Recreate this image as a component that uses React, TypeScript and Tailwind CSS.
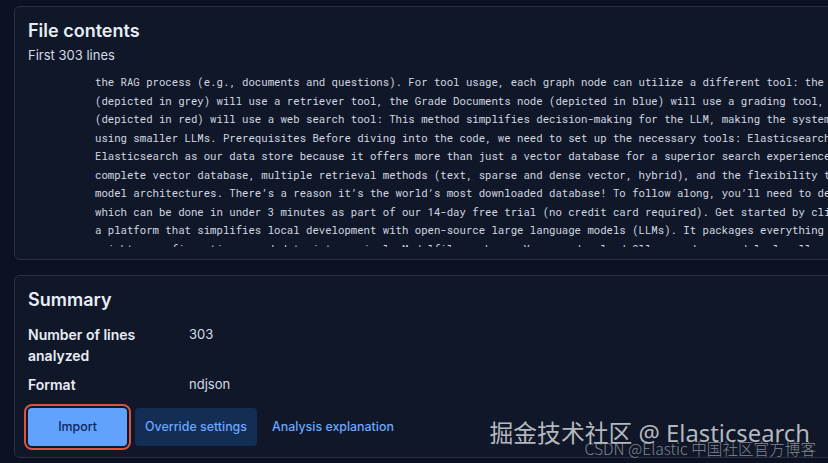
import React from 'react';

const codeLines = [
  'the RAG process (e.g., documents and questions). For tool usage, each graph node can utilize a different tool: the Retrieve node',
  '(depicted in grey) will use a retriever tool, the Grade Documents node (depicted in blue) will use a grading tool, and the Web Search node',
  '(depicted in red) will use a web search tool: This method simplifies decision-making for the LLM, making the system more accessible',
  'using smaller LLMs. Prerequisites Before diving into the code, we need to set up the necessary tools: Elasticsearch: We’ll use',
  'Elasticsearch as our data store because it offers more than just a vector database for a superior search experience. It provides a',
  'complete vector database, multiple retrieval methods (text, sparse and dense vector, hybrid), and the flexibility to choose your',
  'model architectures. There’s a reason it’s the world’s most downloaded database! To follow along, you’ll need to deploy an cluster,',
  'which can be done in under 3 minutes as part of our 14-day free trial (no credit card required). Get started by clicking here. Ollama:',
  'a platform that simplifies local development with open-source large language models (LLMs). It packages everything you need to run',
  'weights, configurations, and data into a single Modelfile package. You can download Ollama and run models locally with ease.',
];

const summary = [
  { label: 'Number of lines analyzed', value: '303' },
  { label: 'Format', value: 'ndjson' },
];

function Card({ children, className = '' }: { children: React.ReactNode; className?: string }) {
  return (
    <div className={`w-[880px] rounded-md border border-[#273142] bg-[#0f1728] px-[13px] ${className}`}>{children}</div>
  );
}

export default function App() {
  return (
    <div
      className="relative h-[463px] w-[828px] overflow-hidden bg-[#0c1221] pl-[14px] pt-[6px] text-[#dfe5ef]"
      style={{ fontFamily: 'Inter, "Noto Sans", sans-serif' }}
    >
      <Card className="pt-[12px] pb-[12px]">
        <h2 className="text-[18px] leading-[24px] font-semibold text-[#e8edf5]">File contents</h2>
        <p className="mt-[3px] text-[13px] leading-[18px] text-[#d6dce6]">First 303 lines</p>
        <div
          className="mt-[9px] h-[174px] overflow-hidden pl-[67px] text-[10.66px] leading-[18.5px] text-[#d3d8e0] whitespace-pre"
          style={{ fontFamily: '"Roboto Mono", "DejaVu Sans Mono", "Liberation Mono", monospace' }}
        >
          {codeLines.map((line, i) => (
            <div key={i}>{line}</div>
          ))}
        </div>
      </Card>

      <Card className="mt-[15px] pt-[12px] pb-[11px]">
        <h2 className="text-[18px] leading-[24px] font-semibold text-[#e8edf5]">Summary</h2>
        <div className="mt-[12px] flex flex-col gap-[8px]">
          {summary.map(({ label, value }) => (
            <div key={label} className="flex text-[14px] leading-[21px]">
              <div className="w-[161px] pr-4 font-semibold text-[#e8edf5]">{label}</div>
              <div className="text-[13px] text-[#d6dce6]">{value}</div>
            </div>
          ))}
        </div>
        <div className="mt-[13px] flex items-center gap-[8px] text-[12.4px] font-medium">
          <button className="h-[38px] w-[99px] rounded-[4px] bg-[#61a2ff] text-[#0b2758] outline-2 outline-offset-[2px] outline-[#d9533d]">
            Import
          </button>
          <button className="h-[38px] w-[122px] rounded-[4px] bg-[#132d55] text-[#6aa8ff]">Override settings</button>
          <button className="h-[38px] px-[7px] text-[#6aa8ff]">Analysis explanation</button>
        </div>
      </Card>

      <div
        className="pointer-events-none absolute right-[18px] top-[417px] text-[23.8px] leading-[32px] text-[#d4d6da]/85"
        style={{ fontFamily: '"Noto Sans", "Noto Sans CJK SC", sans-serif' }}
      >
        掘金技术社区 @ Elasticsearch
      </div>
      <div
        className="pointer-events-none absolute right-[12px] top-[437px] text-[15.6px] leading-[22px] font-light text-[#cfd3d9]/60"
        style={{ fontFamily: '"Noto Sans CJK SC", sans-serif' }}
      >
        CSDN @Elastic 中国社区官方博客
      </div>
    </div>
  );
}
